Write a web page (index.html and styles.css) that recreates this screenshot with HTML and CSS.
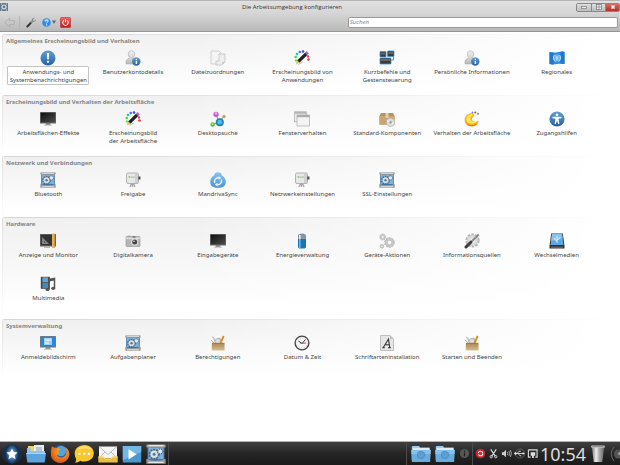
FILE: index.html
```html
<!DOCTYPE html>
<html lang="de">
<head>
<meta charset="utf-8">
<meta name="viewport" content="width=device-width, initial-scale=1">
<title>Die Arbeitsumgebung konfigurieren</title>
<link rel="stylesheet" href="styles.css">
</head>
<body>
<svg class="defs" aria-hidden="true">
  <defs>
    <linearGradient id="g-blue" x1="0" y1="0" x2="0" y2="1"><stop offset="0" stop-color="#5f9fd4"/><stop offset="1" stop-color="#2a629f"/></linearGradient>
    <linearGradient id="g-sky" x1="0" y1="0" x2="0" y2="1"><stop offset="0" stop-color="#8cc4ee"/><stop offset="1" stop-color="#4a94d4"/></linearGradient>
    <linearGradient id="g-grey" x1="0" y1="0" x2="0" y2="1"><stop offset="0" stop-color="#f2f2f2"/><stop offset="1" stop-color="#b9b9b9"/></linearGradient>
    <linearGradient id="g-screen" x1="0" y1="0" x2="1" y2="1"><stop offset="0" stop-color="#111"/><stop offset="1" stop-color="#4b4b4b"/></linearGradient>
    <linearGradient id="g-box" x1="0" y1="0" x2="0" y2="1"><stop offset="0" stop-color="#b08d5c"/><stop offset="1" stop-color="#d8bd92"/></linearGradient>
    <linearGradient id="g-red" x1="0" y1="0" x2="0" y2="1"><stop offset="0" stop-color="#f26a6a"/><stop offset="1" stop-color="#c01818"/></linearGradient>
    <linearGradient id="g-trash" x1="0" y1="0" x2="1" y2="0"><stop offset="0" stop-color="#777"/><stop offset=".35" stop-color="#eee"/><stop offset=".6" stop-color="#aaa"/><stop offset="1" stop-color="#666"/></linearGradient>
    <radialGradient id="g-orb"><stop offset="0" stop-color="#9fc4ea"/><stop offset=".6" stop-color="#3d6ea5"/><stop offset="1" stop-color="#16304f"/></radialGradient>
    <radialGradient id="g-fox" cx=".6" cy=".3" r=".8"><stop offset="0" stop-color="#ffb52e"/><stop offset="1" stop-color="#d4480c"/></radialGradient>
  </defs>
  <symbol id="i-alert" viewBox="0 0 16 16"><circle cx="8" cy="8" r="7.5" fill="url(#g-blue)"/><path d="M6.9 3h2.2L8.700 9.400H7.300z" fill="#fff"/><circle cx="8" cy="11.800" r="1.100" fill="#fff"/></symbol>
  <symbol id="i-user" viewBox="0 0 16 16"><path d="M6.500.8c2.100 0 3.200 1.400 3.200 3.300 0 1.600-.7 2.600-1.400 3.400 0 1.300 3.800 1.200 3.800 4.200V14H1v-2.300c0-3 3.700-2.900 3.700-4.200-.7-.8-1.400-1.800-1.400-3.400C3.300 2.200 4.400.8 6.500.8z" fill="url(#g-grey)" stroke="#aaa" stroke-width=".6"/><circle cx="11.300" cy="11.500" r="4.200" fill="url(#g-blue)"/><path d="M10.700 10.700h1.400v3.200h-1.400zM10.800 8.700h1.200v1.200h-1.200z" fill="#fff"/></symbol>
  <symbol id="i-files" viewBox="0 0 16 16"><path d="M1 1h8l2 2v11H1z" fill="#f5f5f5" stroke="#c2c2c2" stroke-width=".7"/><path d="M9 4h6v8l-3 3H6v-4h3z" fill="#eee" stroke="#bbb" stroke-width=".7"/><path d="M12 15v-3h3z" fill="#ccc"/></symbol>
  <symbol id="i-style" viewBox="0 0 16 16"><circle cx="2" cy="10.500" r="1.200" fill="#6fe04a"/><circle cx="1.700" cy="7" r="1.300" fill="#38dc50"/><circle cx="3" cy="4" r="1.300" fill="#27c6b0"/><circle cx="5.800" cy="2" r="1.300" fill="#3d7cf0"/><circle cx="9" cy="1.500" r="1.300" fill="#4b3be8"/><circle cx="14.500" cy="9.500" r="1.300" fill="#f0342e"/><circle cx="14" cy="6.500" r="1.200" fill="#e23b9b"/><path d="M12.700 1l2.200 2.200-1.700 1.700L11 2.700z" fill="#b865bd"/><path d="M11 2.700l2.300 2.200-7.800 7.800-2.400-2.300z" fill="#222"/><path d="M3.100 10.400l2.400 2.300-3.700 1.700z" fill="#d9c26a"/><path d="M4 14.600l4-3.200 1 .8-4 2.600z" fill="#bbb"/></symbol>
  <symbol id="i-keys" viewBox="0 0 16 16"><g fill="#3c3c3c" stroke="#3a96d8" stroke-width=".8"><rect x="1" y="1.500" width="6" height="5.500" rx=".6"/><rect x="8.500" y="1" width="6.500" height="5.500" rx=".6"/><rect x="1" y="8" width="11" height="6" rx=".6"/></g><path d="M14.500 7v3h-2" fill="none" stroke="#3a96d8"/><path d="M2 2.500h4v2H2zM9.500 2h4.500v2H9.500zM2 9h9v2H2z" fill="#666"/></symbol>
  <symbol id="i-flag" viewBox="0 0 16 16"><path d="M.5 2c5 1.500 10-1.200 15 0v12c-5-1.200-10 1.300-15 0z" fill="#2f8fe0"/><path d="M.5 2c1.500.5 3 .6 4 .4v12c-1.500.1-3-.1-4-.4zM11.500 1.700c1.500-.2 3 0 4 .3v12c-1-.3-2.500-.4-4-.3z" fill="#2476c6"/><circle cx="8" cy="8" r="3.500" fill="#6fb8ef"/><path d="M5.500 5a4.200 4.200 0 0 0 1 6.500M10.500 5a4.200 4.200 0 0 1-1 6.500M8 6v4M7 8h2" fill="none" stroke="#c8e5fa" stroke-width=".9"/></symbol>
  <symbol id="i-monitor" viewBox="0 0 16 16"><path d="M6 12h4l1 2.500H5z" fill="#999"/><path d="M4 14h8v1H4z" fill="#ccc"/><rect x="0" y="1" width="16" height="11.500" rx=".6" fill="#666"/><rect x=".8" y="1.800" width="14.400" height="9.600" fill="url(#g-screen)"/></symbol>
  <symbol id="i-login" viewBox="0 0 16 16"><path d="M6 12h4l1 2.500H5z" fill="#999"/><path d="M4 14h8v1H4z" fill="#ccc"/><rect x="0" y="1" width="16" height="11.500" rx=".6" fill="#777"/><rect x=".8" y="1.800" width="14.400" height="9.600" fill="#2488e2"/><rect x="4" y="3" width="8" height="7" fill="#9fd0f6"/><path d="M5 5h6M5 8h4" stroke="#fff"/></symbol>
  <symbol id="i-nodes" viewBox="0 0 16 16"><path d="M6 3.500L9 11 14 5.500M9 11l-6.500 2.500" stroke="#999" stroke-width="1.100" fill="none"/><circle cx="6" cy="3.300" r="2.600" fill="#c653d8"/><circle cx="6" cy="2.500" r="1.200" fill="#eab4f2"/><circle cx="9.800" cy="11.200" r="4" fill="#237fb0"/><circle cx="9.800" cy="11.200" r="2.400" fill="#42c4f0"/><circle cx="2.600" cy="13.500" r="2.200" fill="#5eb832"/><circle cx="2.600" cy="13" r="1" fill="#b5ee8c"/><circle cx="14" cy="5.500" r="1.700" fill="#c8a262"/></symbol>
  <symbol id="i-windows" viewBox="0 0 16 16"><rect x=".5" y=".8" width="12" height="10" fill="#eee" stroke="#aaa" stroke-width=".7"/><rect x=".5" y=".8" width="12" height="2" fill="#b5b5b5"/><rect x="3" y="4" width="12.500" height="11" fill="#f4f4f4" stroke="#aaa" stroke-width=".7"/><rect x="3" y="4" width="12.500" height="2.200" fill="#aaa"/></symbol>
  <symbol id="i-package" viewBox="0 0 16 16"><path d="M2 2h12l1.500 3v8.500H.5V5z" fill="#b7925f"/><path d="M.5 5h15v8.500H.5z" fill="#c8a572"/><path d="M6.500 2h3v5h-3z" fill="#e3cda6"/><circle cx="11.500" cy="11.300" r="4.200" fill="#ddd" stroke="#aaa" stroke-width=".6"/><path d="M11.500 11.300L8 9.500M11.500 11.300l3.500 1.500" stroke="#fff"/><circle cx="11.500" cy="11.300" r="1.200" fill="#999"/></symbol>
  <symbol id="i-swirl" viewBox="0 0 16 16"><path d="M6.500 2.300C2.500 3.300.6 6 .7 9.200c.2 4.300 3.600 6.300 7.300 6.200 4-.1 6.600-2.400 6.400-6-1.300 1.600-4.900 2-6 .2C7.200 7.500 8 5.800 10.300 5.200 10.500 3.300 9 1.900 6.500 2.300z" fill="#f8ae22"/><path d="M7 3.300C4 3.800 2.200 6 2.300 8.600c.2 2.700 2.300 4 4.900 4.100 2.300.1 4.200-.5 5.300-1.600-2.600.6-5.200-.2-5.900-2.300C6 6.800 7 4.700 9 4.200 8.700 3.400 8 3.100 7 3.300z" fill="#ffe85c"/><path d="M1.300 11c2 3.200 8 4.200 12 1.200-2 4-9.500 4.300-12-1.200z" fill="#ee7416"/><circle cx="8.500" cy="1.500" r=".9" fill="#5b8fd8"/><circle cx="11.300" cy="1.600" r="1" fill="#d2423a"/><circle cx="14" cy="2.800" r="1" fill="#4fae46"/></symbol>
  <symbol id="i-access" viewBox="0 0 16 16"><circle cx="8" cy="8" r="7.600" fill="url(#g-blue)"/><circle cx="8" cy="3.800" r="1.400" fill="#fff"/><path d="M3.500 5.800h9v1.400l-3 .5.900 5.300H9.200L8 9.500 6.800 13H5.600l.9-5.300-3-.5z" fill="#fff"/></symbol>
  <symbol id="i-gearbox" viewBox="0 0 16 16"><rect x="1.200" y="1.800" width="13.600" height="12" fill="#3b78ae"/><path d="M2 3h12v9H2z" fill="#7fb0d8"/><rect x=".3" y=".3" width="15.400" height="2.400" rx=".8" fill="#a3a3a3"/><path d="M.3 11.800q3 1.500 7.700 1.500t7.700-1.500v3.900H.3z" fill="#9b9b9b"/><path d="M2 1.300h12M2 14.700h12" stroke="#e8e8e8" stroke-width=".9"/><circle cx="6.500" cy="8.200" r="3.500" fill="none" stroke="#4f6475" stroke-width="1.800" stroke-dasharray="1.500 .7"/><circle cx="6.500" cy="8.200" r="3" fill="#d9e0e5"/><circle cx="6.500" cy="8.200" r="1.200" fill="#4f7ba2"/><circle cx="11.400" cy="5.900" r="2.100" fill="#e2e8ec" stroke="#4f6475" stroke-dasharray="1.100 .6"/></symbol>
  <symbol id="i-network" viewBox="0 0 16 16"><path d="M7.500 11v4M5 15l1.500-3.500M10 15l-1.500-3.500" stroke="#a5a5a5" stroke-width="1.300"/><rect x="1.500" y="1" width="12" height="10.500" rx="1.500" fill="#e8e8e8" stroke="#a2a2a2" stroke-width=".8"/><path d="M10 1.500h3v9.500h-3z" fill="#cfcfcf"/><rect x="13.200" y="4.500" width="2.300" height="3" fill="#555"/><circle cx="4.500" cy="5" r="1.100" fill="#8fce68"/><path d="M7 4.500v1.200M9 4.500v1.200" stroke="#888"/></symbol>
  <symbol id="i-sync" viewBox="0 0 16 16"><path d="M8 .3c2.500 0 3.600 1.500 4 3.200C14.600 5 16 7.500 15.800 10.500 15.500 14 13 15.800 8 15.800S.5 14 .2 10.500C0 7.500 1.400 5 4 3.500 4.400 1.800 5.500.3 8 .3z" fill="url(#g-sky)"/><path d="M4.800 11A3.700 3.700 0 0 1 9 5.900M11.200 7.500A3.700 3.700 0 0 1 7 12.600" fill="none" stroke="#e8f4fd" stroke-width="1.400"/><path d="M8.500 4l2.700 2-2.700 1.800zM7.500 14.400l-2.700-1.900 2.700-1.800z" fill="#e8f4fd"/></symbol>
  <symbol id="i-display" viewBox="0 0 16 16"><rect x="0" y="1" width="16" height="12.500" fill="#666"/><rect x=".8" y="1.800" width="13" height="10.500" fill="#333"/><path d="M2 11V4l7 7z" fill="#858585"/><path d="M4 9.500V8l1.500 1.500z" fill="#222"/><path d="M4 14.500h6" stroke="#bbb"/><rect x="12" y=".7" width="2.800" height="14.300" fill="#d9a03d"/><path d="M13 1v14" stroke="#f5d48c" stroke-width=".7"/></symbol>
  <symbol id="i-camera" viewBox="0 0 16 16"><rect x="1" y="3.500" width="14" height="10" rx=".8" fill="#b5b5b5" stroke="#939393" stroke-width=".6"/><path d="M1 4.500h14v1.600H1z" fill="#dedede"/><path d="M2.500 2.700h3v1h-3z" fill="#999"/><circle cx="9.700" cy="9" r="3.700" fill="#ddd"/><circle cx="9.700" cy="9" r="2.500" fill="#444"/><circle cx="9" cy="8.200" r=".8" fill="#eee"/><path d="M7.500 4h3" stroke="#555"/></symbol>
  <symbol id="i-battery" viewBox="0 0 16 16"><rect x="6" y=".4" width="4" height="2" rx=".6" fill="#aaa"/><rect x="4" y="1.500" width="8" height="14" rx="1.400" fill="#1d72b2"/><path d="M4 6V3q0-1.500 1.500-1.500h5Q12 1.500 12 3v3z" fill="#8d959b"/><path d="M5.800 2v13" stroke="#69b7e8" stroke-width="1.600"/><path d="M5.800 2v4" stroke="#e8e8e8" stroke-width="1.600"/></symbol>
  <symbol id="i-gears" viewBox="0 0 16 16"><g fill="none" stroke="#c6c6c6"><circle cx="10.500" cy="9.500" r="3.300" stroke-width="3"/><circle cx="10.500" cy="9.500" r="4.900" stroke="#b9b9b9" stroke-width="1" stroke-dasharray="1.900 1.200"/><circle cx="3.700" cy="4" r="2" stroke-width="2"/><circle cx="3.700" cy="4" r="3.100" stroke="#bbb" stroke-width=".8" stroke-dasharray="1.200 1"/><circle cx="3" cy="13.300" r="1.500" stroke-width="1.700"/></g></symbol>
  <symbol id="i-tools" viewBox="0 0 16 16"><circle cx="8.500" cy="7.500" r="6.200" fill="none" stroke="#b5b5b5" stroke-width="1.800" stroke-dasharray="2.600 1.300"/><circle cx="8.500" cy="7.500" r="5.400" fill="#dcdcdc" stroke="#b8b8b8" stroke-width=".6"/><circle cx="8.500" cy="7.500" r="2.500" fill="#f3f3f3"/><path d="M14.800 1.500L7 9" stroke="#888" stroke-width="2"/><path d="M6.800 9.200L2 14" stroke="#3c3c3c" stroke-width="3" stroke-linecap="round"/></symbol>
  <symbol id="i-drive" viewBox="0 0 16 16"><path d="M2.200.5h11.600L15.500 13v2.500H.5V13z" fill="#333"/><path d="M3 1h10l1.500 11h-13z" fill="#5ba6e4"/><path d="M3 1h10l.6 4.500L2.200 8z" fill="#89c2ef"/><path d="M8 10V3M8 8L5.800 6.500V5M8 7l2.200-1.200V4.500" fill="none" stroke="#e8f5ff" stroke-width=".9"/><path d="M2 14.200h12" stroke="#888" stroke-width=".8"/></symbol>
  <symbol id="i-media" viewBox="0 0 16 16"><rect x=".8" y=".8" width="9" height="12" fill="#444"/><rect x="2.400" y="1.300" width="5.600" height="5" fill="#62a6cf"/><rect x="2.400" y="7" width="5.600" height="5.200" fill="#4389b9"/><path d="M9 13.300V3.500l5.500-1v9.500" fill="none" stroke="#555" stroke-width="1.500"/><path d="M9 3.500l5.500-1v2L9 5.500z" fill="#555"/><ellipse cx="7.500" cy="13.500" rx="2.100" ry="1.600" fill="#555"/><ellipse cx="13.200" cy="12.300" rx="2" ry="1.600" fill="#555"/></symbol>
  <symbol id="i-toolbox" viewBox="0 0 16 16"><path d="M2 2l2 1 1 4M1 5l4 4M7 4l3-1 1 4-3 2z" fill="#d8d8d8" stroke="#bdbdbd"/><circle cx="8" cy="6.500" r="3" fill="#ddd" stroke="#aaa" stroke-width=".8"/><path d="M10.500 8l3.200-7" stroke="#e08c26" stroke-width="1.900"/><path d="M2 7.800h12.500v1.600H2z" fill="#9c7d50"/><rect x="1.800" y="9" width="12.700" height="6.500" fill="url(#g-box)"/></symbol>
  <symbol id="i-clock" viewBox="0 0 16 16"><circle cx="8" cy="8" r="6.900" fill="#f7f7f7" stroke="#444" stroke-width="1.400"/><circle cx="8" cy="8" r="5" fill="none" stroke="#aaa" stroke-width=".9" stroke-dasharray=".6 2"/><path d="M4.500 6L8 8.500l3.500-4" stroke="#333" fill="none" stroke-width="1"/><path d="M6.500 8.500L12 8" stroke="#d33" stroke-width=".9"/></symbol>
  <symbol id="i-font" viewBox="0 0 16 16"><path d="M1.500.5h9.500l3.500 3.500v11.500h-13z" fill="#e6e6e6" stroke="#aaa" stroke-width=".7"/><path d="M11 .5V4h3.500z" fill="#bbb"/><path d="M4.300 12.500L9.500 4l1.200 8.500M5.800 9.800h4.500M3.300 12.700h2.500M9 12.700h3" stroke="#333" stroke-width="1.100" fill="none"/></symbol>

  <symbol id="t-folder" viewBox="0 0 20 20"><path d="M.8 3Q.8 2 2 2h6l1 1.500h9q1 0 1 1V16H.8z" fill="#9ccbef"/><path d="M2 4h16v2H2z" fill="#dcebf6"/><path d="M.2 6h19.600l-.7 12H.9z" fill="#69addf"/><path d="M.2 6h19.600l-.3 4H.5z" fill="#86c0ea"/><circle cx="10" cy="11" r="3.700" fill="#5d9fd1" stroke="#4e8fc2"/></symbol>
  <symbol id="t-files" viewBox="0 0 20 20"><path d="M2 2h6v8H2z" fill="#f1d36a"/><path d="M8 1h10v10H8z" fill="#e9eef2"/><path d="M10 3h6v5h-6z" fill="#b7c7d5"/><path d="M1 4h3l1 3h14v6H1z" fill="#89c3ee"/><path d="M0 9h20l-1.300 9.500H1.300z" fill="#5ba4df"/><path d="M.4 9.500h19.200" stroke="#a4d4f6"/></symbol>
  <symbol id="t-start" viewBox="0 0 20 20"><circle cx="10" cy="10" r="9.700" fill="#16304f"/><ellipse cx="10" cy="10" rx="6.500" ry="9.400" fill="url(#g-orb)"/><path d="M10 4.500l1.700 3.600 3.900.5-2.900 2.700.8 3.900-3.500-1.900-3.500 1.900.8-3.900-2.900-2.700 3.900-.5z" fill="#fff"/></symbol>
  <symbol id="t-firefox" viewBox="0 0 20 20"><circle cx="10" cy="10" r="9" fill="#25569f"/><circle cx="11" cy="7" r="5.200" fill="#4ea5dd"/><path d="M2 2c1 1 2 1.800 4 2 2 0 3.500.3 4.500 1.500L8 7l1.500 2.500C7 10 6.500 12 9 13c3 1.200 6-.3 7-3 1-3 .2-5-1.500-7C19 5 20.300 9 18.800 13 16 20.500 5 21 1.600 13.500.3 10 1 5 2 2z" fill="url(#g-fox)"/></symbol>
  <symbol id="t-chat" viewBox="0 0 20 20"><path d="M10.500 1c5.500 0 9.300 3.600 9.300 8.300s-4 8.200-9 8.200c-2 0-3 0-4.500-.8-1.500 1.300-3.300 2-5.300 1.800 1-1 1.300-2.500 1-4C1 13 .7 11 .7 9.300.7 4.600 5 1 10.500 1z" fill="#fbc72a"/><path d="M3 6c3-5 12-5 15 0-4-2-11-2-15 0z" fill="#fde27b"/><circle cx="5.500" cy="9.700" r="1.200" fill="#fff"/><circle cx="10.200" cy="9.700" r="1.200" fill="#fff"/><circle cx="14.900" cy="9.700" r="1.200" fill="#fff"/></symbol>
  <symbol id="t-mail" viewBox="0 0 20 20"><path d="M1 2.500h18V14H1z" fill="#f4f4f4"/><path d="M1 2.500l9 8 9-8M1 14l6-6M19 14l-6-6" stroke="#bbb" fill="none"/><path d="M.3 12.500h5l2 2h5.400l2-2h5v6H.3z" fill="#ecbd3c"/><path d="M.3 13h5l2 2h5.400l2-2h5" fill="none" stroke="#ffe58c"/></symbol>
  <symbol id="t-play" viewBox="0 0 20 20"><rect x=".8" y="2" width="18.400" height="16.500" fill="#4a98d0"/><path d="M.8 2h18.400v6L.8 16z" fill="#74b9e5"/><path d="M6.500 5l8 5.300-8 5.300z" fill="#fff"/></symbol>
</svg>

<main class="window">
  <header class="chrome">
    <div class="titlebar">
      <svg class="app-icon" viewBox="0 0 8 8" aria-hidden="true"><rect width="8" height="8" fill="#66798a"/><circle cx="4" cy="4" r="2" fill="none" stroke="#dfe6eb" stroke-width="1.200"/><path d="M1 1h1M6 1h1M1 7h1M6 7h1" stroke="#dfe6eb"/></svg>
      <h1 class="caption">Die Arbeitsumgebung konfigurieren</h1>
      <div class="window-buttons">
        <button class="winbtn" aria-label="Minimieren"><svg viewBox="0 0 14 8"><rect x="4.500" y="3.500" width="5" height="2" fill="#eee" stroke="#777" stroke-width=".7"/></svg></button>
        <button class="winbtn" aria-label="Maximieren"><svg viewBox="0 0 14 8"><rect x="4.500" y="1.500" width="5" height="5" fill="#eee" stroke="#777" stroke-width=".7"/><path d="M7 1.500v5M4.500 4h5" stroke="#777" stroke-width=".6"/></svg></button>
        <button class="winbtn close" aria-label="Schließen"><svg viewBox="0 0 14 8"><path d="M5.500 2.500l3 3M8.500 2.500l-3 3" stroke="#fff" stroke-width="1.500"/></svg></button>
      </div>
    </div>
    <div class="toolbar">
      <button class="tool" aria-label="Zurück"><svg viewBox="0 0 12 12"><path d="M.8 6L6 1.300V4h5.200v4H6v2.700z" fill="#c9c9c9" stroke="#a6a6a6" stroke-width=".8"/></svg></button>
      <span class="tool-divider"></span>
      <button class="tool" aria-label="Einrichten"><svg viewBox="0 0 12 12"><path d="M10.800 2.500L9.300 4 8 3.800 7.900 2.500 9.300 1C7.800.6 6.200 1.700 6.300 3.500L3.500 6.300l1.700 1.700 2.900-2.700c1.700.2 3.100-1.200 2.700-2.800z" fill="#8e8e8e"/><path d="M4.800 7l-3.300 3.400" stroke="#333" stroke-width="2.200" stroke-linecap="round"/></svg></button>
      <button class="tool help" aria-label="Hilfe"><svg viewBox="0 0 12 12"><circle cx="6" cy="6" r="4.700" fill="#2c8fe6"/><path d="M3 4a3.500 3.500 0 0 1 6 0z" fill="#7dc0f5"/><path d="M4.600 4.900c0-2 3-2 3-.2C7.600 5.800 6.100 5.700 6.100 7" fill="none" stroke="#fff" stroke-width="1"/><circle cx="6.100" cy="8.600" r=".7" fill="#fff"/></svg><svg class="arrow" viewBox="0 0 4 4"><path d="M0 .5h4L2 4z" fill="#666"/></svg></button>
      <button class="tool" aria-label="Beenden"><svg viewBox="0 0 12 12"><rect x=".5" y=".5" width="11" height="11" rx="1.200" fill="url(#g-red)" stroke="#b22" stroke-width=".6"/><path d="M4.300 3.700a3 3 0 1 0 3.400 0M6 2.400v3.200" fill="none" stroke="#fff" stroke-width="1.100"/></svg></button>
      <input class="search" type="search" placeholder="Suchen" aria-label="Suchen">
    </div>
  </header>

  <div class="content">
    <section class="group">
      <h2>Allgemeines Erscheinungsbild und Verhalten</h2>
      <div class="grid">
        <button class="item selected"><svg><use href="#i-alert"/></svg><span>Anwendungs- und Systembenachrichtigungen</span></button>
        <button class="item"><svg><use href="#i-user"/></svg><span>Benutzerkontodetails</span></button>
        <button class="item"><svg><use href="#i-files"/></svg><span>Dateizuordnungen</span></button>
        <button class="item"><svg><use href="#i-style"/></svg><span>Erscheinungsbild von<br>Anwendungen</span></button>
        <button class="item"><svg><use href="#i-keys"/></svg><span>Kurzbefehle und<br>Gestensteuerung</span></button>
        <button class="item"><svg><use href="#i-user"/></svg><span>Persönliche Informationen</span></button>
        <button class="item"><svg><use href="#i-flag"/></svg><span>Regionales</span></button>
      </div>
    </section>
    <section class="group">
      <h2>Erscheinungsbild und Verhalten der Arbeitsfläche</h2>
      <div class="grid">
        <button class="item"><svg><use href="#i-monitor"/></svg><span>Arbeitsflächen-Effekte</span></button>
        <button class="item"><svg><use href="#i-style"/></svg><span>Erscheinungsbild<br>der Arbeitsfläche</span></button>
        <button class="item"><svg><use href="#i-nodes"/></svg><span>Desktopsuche</span></button>
        <button class="item"><svg><use href="#i-windows"/></svg><span>Fensterverhalten</span></button>
        <button class="item"><svg><use href="#i-package"/></svg><span>Standard-Komponenten</span></button>
        <button class="item"><svg><use href="#i-swirl"/></svg><span>Verhalten der Arbeitsfläche</span></button>
        <button class="item"><svg><use href="#i-access"/></svg><span>Zugangshilfen</span></button>
      </div>
    </section>
    <section class="group">
      <h2>Netzwerk und Verbindungen</h2>
      <div class="grid">
        <button class="item"><svg><use href="#i-gearbox"/></svg><span>Bluetooth</span></button>
        <button class="item"><svg><use href="#i-network"/></svg><span>Freigabe</span></button>
        <button class="item"><svg><use href="#i-sync"/></svg><span>MandrivaSync</span></button>
        <button class="item"><svg><use href="#i-network"/></svg><span>Netzwerkeinstellungen</span></button>
        <button class="item"><svg><use href="#i-gearbox"/></svg><span>SSL-Einstellungen</span></button>
      </div>
    </section>
    <section class="group">
      <h2>Hardware</h2>
      <div class="grid">
        <button class="item"><svg><use href="#i-display"/></svg><span>Anzeige und Monitor</span></button>
        <button class="item"><svg><use href="#i-camera"/></svg><span>Digitalkamera</span></button>
        <button class="item"><svg><use href="#i-monitor"/></svg><span>Eingabegeräte</span></button>
        <button class="item"><svg><use href="#i-battery"/></svg><span>Energieverwaltung</span></button>
        <button class="item"><svg><use href="#i-gears"/></svg><span>Geräte-Aktionen</span></button>
        <button class="item"><svg><use href="#i-tools"/></svg><span>Informationsquellen</span></button>
        <button class="item"><svg><use href="#i-drive"/></svg><span>Wechselmedien</span></button>
        <button class="item"><svg><use href="#i-media"/></svg><span>Multimedia</span></button>
      </div>
    </section>
    <section class="group">
      <h2>Systemverwaltung</h2>
      <div class="grid">
        <button class="item"><svg><use href="#i-login"/></svg><span>Anmeldebildschirm</span></button>
        <button class="item"><svg><use href="#i-gearbox"/></svg><span>Aufgabenplaner</span></button>
        <button class="item"><svg><use href="#i-toolbox"/></svg><span>Berechtigungen</span></button>
        <button class="item"><svg><use href="#i-clock"/></svg><span>Datum &amp; Zeit</span></button>
        <button class="item"><svg><use href="#i-font"/></svg><span>Schriftarteninstallation</span></button>
        <button class="item"><svg><use href="#i-toolbox"/></svg><span>Starten und Beenden</span></button>
      </div>
    </section>
  </div>
</main>

<footer class="panel">
  <nav class="launchers" aria-label="Starter">
    <button aria-label="Startmenü"><svg><use href="#t-start"/></svg></button>
    <button aria-label="Dateien"><svg><use href="#t-files"/></svg></button>
    <button aria-label="Firefox"><svg><use href="#t-firefox"/></svg></button>
    <button aria-label="Chat"><svg><use href="#t-chat"/></svg></button>
    <button aria-label="E-Mail"><svg><use href="#t-mail"/></svg></button>
    <button aria-label="Medien"><svg><use href="#t-play"/></svg></button>
    <button aria-label="Systemeinstellungen"><svg viewBox="0 0 16 16"><use href="#i-gearbox" width="16" height="16"/></svg></button>
  </nav>
  <span class="panel-divider"></span>
  <div class="spacer"></div>
  <span class="panel-divider"></span>
  <div class="launchers places">
    <button aria-label="Dokumente"><svg><use href="#t-folder"/></svg></button>
    <button aria-label="Persönlicher Ordner"><svg><use href="#t-folder"/></svg></button>
  </div>
  <div class="tray">
    <button aria-label="Benachrichtigungen"><svg viewBox="0 0 12 12"><circle cx="6" cy="6" r="5" fill="#555"/><path d="M6 5v4M6 2.800v1.200" stroke="#222" stroke-width="1.300"/></svg></button>
    <span class="panel-divider"></span>
    <button aria-label="Aktualisierung"><svg viewBox="0 0 12 12"><circle cx="6" cy="6" r="5.300" fill="#d3202a"/><circle cx="6" cy="6" r="2.500" fill="none" stroke="#fff" stroke-width="1.200" stroke-dasharray="6 1.800"/></svg></button>
    <button aria-label="Zwischenablage"><svg viewBox="0 0 12 12"><path d="M3 1.500L8 9M9 1.500L4 9" stroke="#ddd" stroke-width="1.300"/><circle cx="3.500" cy="9.500" r="1.300" fill="none" stroke="#ddd"/><circle cx="8.500" cy="9.500" r="1.300" fill="none" stroke="#ddd"/></svg></button>
    <button aria-label="Lautstärke"><svg viewBox="0 0 12 12"><path d="M1 4.500h1.800L5.500 2v8L2.800 7.500H1z" fill="#ccc"/><path d="M7 4.500q1 1.500 0 3M8.600 3.300q1.800 2.700 0 5.400M10.200 2.200q2.500 3.800 0 7.600" stroke="#ccc" fill="none" stroke-width=".8"/></svg></button>
    <button aria-label="USB-Gerät"><svg viewBox="0 0 12 12"><circle cx="6.500" cy="6" r="5" fill="none" stroke="#777" stroke-width=".7"/><path d="M1 6h9M3.500 6l2-2.500h2M4.500 6l2 2.500h1.500" fill="none" stroke="#eee" stroke-width=".9"/><circle cx="1.600" cy="6" r="1.300" fill="#eee"/><path d="M9.500 4.600L12 6 9.500 7.400z" fill="#eee"/></svg></button>
    <button aria-label="Netzwerk"><svg viewBox="0 0 12 12"><path d="M1.500 2h9.500v8H9M1.500 2v8H4" fill="none" stroke="#ddd" stroke-width="1.200"/><path d="M4 4.500h5v4H7.500V11h-2V8.500H4z" fill="#ddd"/></svg></button>
  </div>
  <time class="clock">10:54</time>
  <button class="trash" aria-label="Papierkorb"><svg viewBox="0 0 16 20"><path d="M1.500 3.500h13L12.500 19h-9z" fill="url(#g-trash)"/><rect x=".8" y="1.500" width="14.400" height="2.500" rx="1" fill="#ccc"/><path d="M2 2.700h12" stroke="#777" stroke-width=".8"/></svg></button>
  <button class="cashew" aria-label="Kontrollleiste"><svg viewBox="0 0 10 16"><path d="M4 1Q-1.500 8 4 15" fill="none" stroke="#666"/><circle cx="8.500" cy="8" r="4.500" fill="#555"/><path d="M10 6q-2 .5-2 2.500h2z" fill="#bbb"/></svg></button>
</footer>
</body>
</html>
```
FILE: styles.css
```css
* {
  box-sizing: border-box;
}

body {
  display: flex;
  flex-direction: column;
  min-height: 100vh;
  margin: 0;
  background: #fff;
  color: #444;
  font: 6px/8px "Noto Sans", "Open Sans", sans-serif;
}

button {
  display: flex;
  align-items: center;
  justify-content: center;
  margin: 0;
  padding: 0;
  border: 0;
  background: none;
  color: inherit;
  font: inherit;
}

svg {
  display: block;
  flex: none;
}

.defs {
  position: absolute;
  width: 0;
  height: 0;
}

.window {
  flex: 1;
}

/* Title bar and tool bar */
.chrome {
  border-top: 1px solid #b5b5b5;
  border-bottom: 1px solid #969696;
  background: linear-gradient(#e0e0e0, #d6d6d6 40%, #b9b9b9);
}

.titlebar {
  display: grid;
  grid-template-columns: auto 1fr auto;
  align-items: center;
  height: 12px;
}

.app-icon {
  width: 8px;
  height: 8px;
}

.caption {
  margin: 0;
  color: #333;
  font: 400 6px/8px "Open Sans", "Noto Sans", sans-serif;
  text-align: center;
}

.window-buttons {
  display: flex;
  border: 1px solid #888;
  border-radius: 2px;
  overflow: hidden;
}

.winbtn {
  width: 14px;
  height: 7px;
  background: linear-gradient(#dedede, #bdbdbd);
}

.winbtn + .winbtn {
  border-left: 1px solid #888;
}

.winbtn svg {
  width: 14px;
  height: 8px;
}

.winbtn.close {
  background: linear-gradient(#d86c62, #b52f28);
}

.toolbar {
  display: flex;
  align-items: center;
  gap: 4px;
  height: 18px;
  padding: 0 2px 0 4px;
}

.tool svg {
  width: 11px;
  height: 11px;
}

.tool .arrow {
  width: 4px;
  height: 4px;
}

.tool-divider {
  width: 1px;
  height: 12px;
  margin-right: 2px;
  background: #b4b4b4;
}

.search {
  width: 44%;
  height: 11px;
  margin: 0 0 0 auto;
  padding: 0 1px;
  border: 1px solid #999;
  border-radius: 2px;
  background: #fff;
  color: #333;
  font: 6px/8px "Noto Sans", "Open Sans", sans-serif;
  appearance: none;
}

.search::placeholder {
  color: #8a8a8a;
  font-style: italic;
}

/* Module groups */
.content {
  padding: 2px 2px 8px;
}

.group {
  min-height: 61px;
  border-radius: 3px 0 0 0;
  background:
    linear-gradient(to right, #d6d6d6, #fff) top / 100% 1px no-repeat,
    linear-gradient(#dedede, #fff) left / 1px 100% no-repeat,
    linear-gradient(to right, transparent 30%, #fff 97%),
    linear-gradient(#f0f0f0, #fff 90%);
}

.group h2 {
  margin: 0;
  padding: 2px 4px 4px;
  color: #848484;
  font-size: 6px;
  line-height: 10px;
}

.grid {
  display: grid;
  grid-template-columns: repeat(7, 1fr);
  padding: 0 19px 0 4px;
}

.item {
  flex-direction: column;
  justify-content: flex-start;
  height: 43px;
}

.item svg {
  width: 16px;
  height: 16px;
}

.item span {
  padding: 1px 0 0;
  border: 1px solid transparent;
  white-space: nowrap;
}

.selected span {
  width: 82px;
  border-color: #c4c4c4;
  border-radius: 1px;
  background: #fff;
  white-space: normal;
}

/* Bottom panel */
.panel {
  display: flex;
  align-items: center;
  height: 24px;
  border-top: 1px solid #b4b4b4;
  background: linear-gradient(#3f3f3f, #262626 50%, #1a1a1a);
  color: #ddd;
}

.launchers {
  display: flex;
  gap: 4px;
  padding: 0 2px;
}

.launchers svg {
  width: 20px;
  height: 20px;
}

.places {
  padding: 0 2px 0 4px;
}

.panel-divider {
  width: 1px;
  height: 22px;
  background: #4d4d4d;
}

.spacer {
  flex: 1;
}

.tray {
  display: flex;
  align-items: center;
  gap: 2px;
  padding: 0 2px;
}

.tray svg {
  width: 11px;
  height: 11px;
}

.clock {
  font-size: 18px;
  line-height: 22px;
}

.trash {
  margin: 0 4px;
}

.trash svg {
  width: 16px;
  height: 19px;
}

.cashew svg {
  width: 10px;
  height: 16px;
}
```
